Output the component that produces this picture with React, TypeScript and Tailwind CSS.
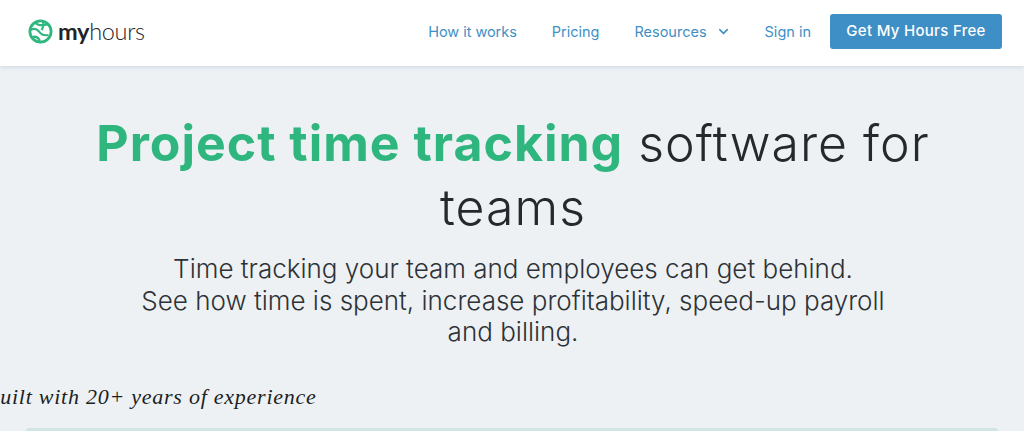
import { ChevronDown } from "lucide-react";

const NAV_LINKS = ["How it works", "Pricing"];

function Logo() {
  return (
    <div className="flex items-center gap-[5px]">
      <svg width="25" height="25" viewBox="0 0 25 25" fill="none" stroke="#2fb77f">
        <circle cx="12.500" cy="12.500" r="10.600" strokeWidth="2.800" />
        <path d="M2.500 11c3.500-2 6.500-1 8.500 1.500s3.500 4.500 9.500 3.500 M7 3.500c2 2.500 6 3.500 13 2 M13.500 11c1.500-2 2.500-4.500 1.500-8.500 M4 18.500c3-1.500 6-.5 8 3.500" strokeWidth="2.200" />
      </svg>
      <span className="font-['Lato',sans-serif] text-[23.500px] leading-none tracking-[-0.3px] text-[#1f2428]">
        <span className="font-bold">my</span>
        <span className="font-light">hours</span>
      </span>
    </div>
  );
}

export default function App() {
  return (
    <div className="h-[431px] w-[1024px] overflow-hidden bg-[#edf1f4] font-['Inter',sans-serif]">
      <header className="flex h-[66px] items-center justify-between bg-white pb-[3px] pl-[28px] pr-[22px] shadow-[0_1px_4px_rgba(120,140,170,0.25)]">
        <Logo />
        <nav className="flex items-center text-[14.500px] text-[#3f8fc5]">
          <a className="mr-[35px] tracking-[-0.050px]">{NAV_LINKS[0]}</a>
          <a className="mr-[35px]">{NAV_LINKS[1]}</a>
          <a className="mr-[34px] flex items-center gap-[9px]">
            Resources
            <ChevronDown className="h-[15px] w-[15px]" strokeWidth={2.500} />
          </a>
          <a className="mr-[19px]">Sign in</a>
          <a className="flex h-[35px] w-[172px] items-center justify-center rounded-[3px] bg-[#3d8fc6] text-[15px] font-medium tracking-[0.300px] text-white">
            Get My Hours Free
          </a>
        </nav>
      </header>

      <main className="flex flex-col items-center pt-[45px]">
        <h1 className="w-[860px] pl-[2px] text-center text-[50px] font-light leading-[64px] tracking-[1px] text-[#24292e]">
          <span className="font-bold tracking-[1px] text-[#2fb67e]">Project time tracking</span> software for teams
        </h1>
        <p className="mt-[14px] w-[800px] pl-[2px] text-center text-[26px] font-light leading-[31.500px] text-[#2d3237]">
          Time tracking your team and employees can get behind.
          <br />
          See how time is spent, increase profitability, speed-up payroll
          <br />
          and billing.
        </p>
        <div className="mt-[35px] -ml-[14px] self-start whitespace-nowrap font-['Liberation_Serif',serif] text-[22px] italic leading-[28px] tracking-[0.750px] text-[#1c1f22]">
          Built with 20+ years of experience
        </div>
        <div className="mt-[17px] h-[4px] w-[972px] rounded-t-[3px] bg-[#cfe6e2]" />
      </main>
    </div>
  );
}
